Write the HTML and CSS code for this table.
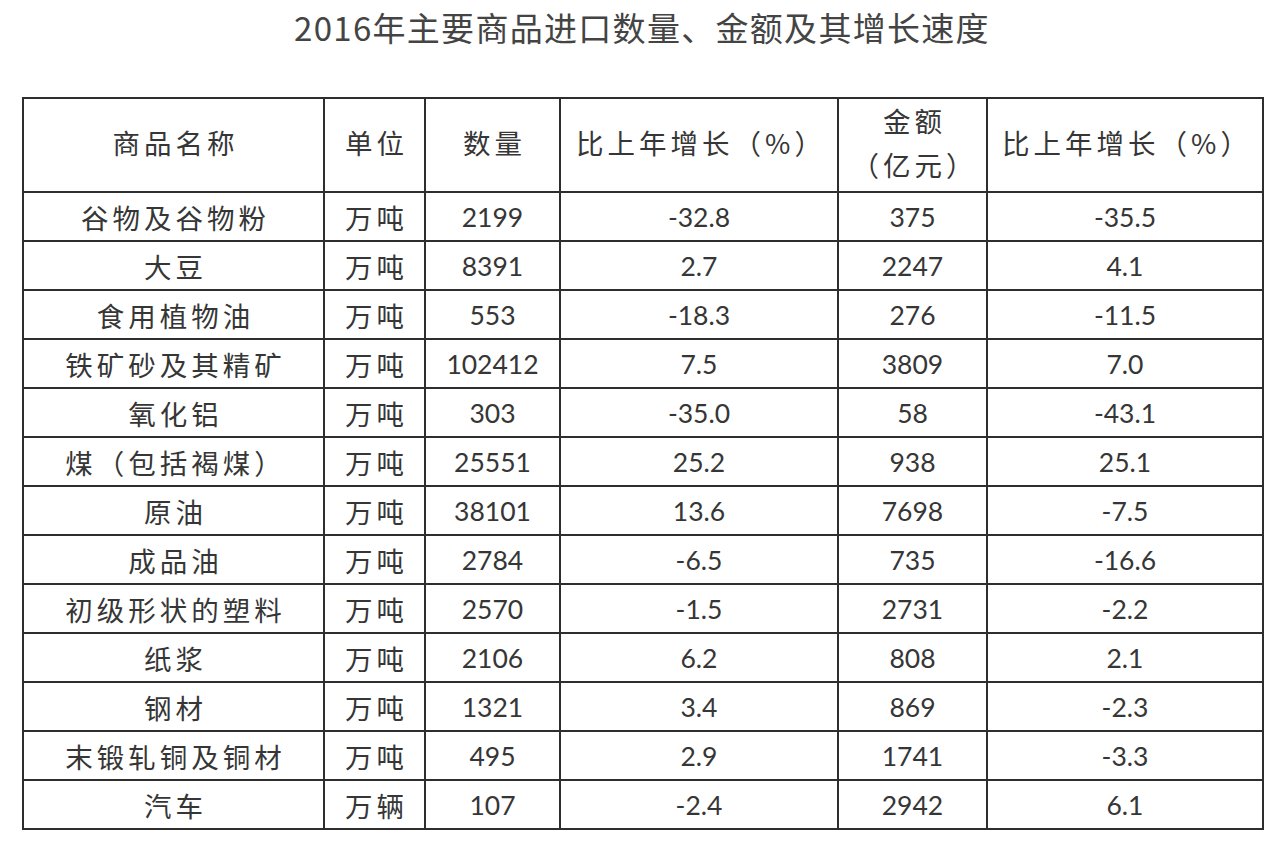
FILE: index.html
```html
<!DOCTYPE html>
<html lang="zh-CN">
<head>
<meta charset="utf-8">
<title>2016年主要商品进口数量、金额及其增长速度</title>
<link rel="stylesheet" href="styles.css">
</head>
<body>
<h1 class="title">2016年主要商品进口数量、金额及其增长速度</h1>
<div class="grid">
  <div class="cell head cjk">商品名称</div>
  <div class="cell head cjk">单位</div>
  <div class="cell head cjk">数量</div>
  <div class="cell head cjk">比上年增长（%）</div>
  <div class="cell head cjk two"><span>金额</span><span>（亿元）</span></div>
  <div class="cell head cjk">比上年增长（%）</div>

  <div class="cell cjk">谷物及谷物粉</div><div class="cell cjk">万吨</div><div class="cell num">2199</div><div class="cell num">-32.8</div><div class="cell num">375</div><div class="cell num">-35.5</div>
  <div class="cell cjk">大豆</div><div class="cell cjk">万吨</div><div class="cell num">8391</div><div class="cell num">2.7</div><div class="cell num">2247</div><div class="cell num">4.1</div>
  <div class="cell cjk">食用植物油</div><div class="cell cjk">万吨</div><div class="cell num">553</div><div class="cell num">-18.3</div><div class="cell num">276</div><div class="cell num">-11.5</div>
  <div class="cell cjk">铁矿砂及其精矿</div><div class="cell cjk">万吨</div><div class="cell num">102412</div><div class="cell num">7.5</div><div class="cell num">3809</div><div class="cell num">7.0</div>
  <div class="cell cjk">氧化铝</div><div class="cell cjk">万吨</div><div class="cell num">303</div><div class="cell num">-35.0</div><div class="cell num">58</div><div class="cell num">-43.1</div>
  <div class="cell cjk">煤（包括褐煤）</div><div class="cell cjk">万吨</div><div class="cell num">25551</div><div class="cell num">25.2</div><div class="cell num">938</div><div class="cell num">25.1</div>
  <div class="cell cjk">原油</div><div class="cell cjk">万吨</div><div class="cell num">38101</div><div class="cell num">13.6</div><div class="cell num">7698</div><div class="cell num">-7.5</div>
  <div class="cell cjk">成品油</div><div class="cell cjk">万吨</div><div class="cell num">2784</div><div class="cell num">-6.5</div><div class="cell num">735</div><div class="cell num">-16.6</div>
  <div class="cell cjk">初级形状的塑料</div><div class="cell cjk">万吨</div><div class="cell num">2570</div><div class="cell num">-1.5</div><div class="cell num">2731</div><div class="cell num">-2.2</div>
  <div class="cell cjk">纸浆</div><div class="cell cjk">万吨</div><div class="cell num">2106</div><div class="cell num">6.2</div><div class="cell num">808</div><div class="cell num">2.1</div>
  <div class="cell cjk">钢材</div><div class="cell cjk">万吨</div><div class="cell num">1321</div><div class="cell num">3.4</div><div class="cell num">869</div><div class="cell num">-2.3</div>
  <div class="cell cjk">末锻轧铜及铜材</div><div class="cell cjk">万吨</div><div class="cell num">495</div><div class="cell num">2.9</div><div class="cell num">1741</div><div class="cell num">-3.3</div>
  <div class="cell cjk">汽车</div><div class="cell cjk">万辆</div><div class="cell num">107</div><div class="cell num">-2.4</div><div class="cell num">2942</div><div class="cell num">6.1</div>
</div>
</body>
</html>
```

FILE: styles.css
```css
html, body {
  margin: 0;
  padding: 0;
  background: #ffffff;
}

body {
  font-family: "Noto Sans CJK SC", "Noto Sans", sans-serif;
  color: #333333;
}

.title {
  margin: 0;
  height: 56px;
  line-height: 54px;
  text-align: center;
  font-size: 33px;
  font-weight: normal;
  letter-spacing: 1.3px;
  color: #444444;
  padding-left: 1px;
}

.grid {
  display: grid;
  grid-template-columns: 301px 101px 135px 278px 149px 276px;
  grid-template-rows: 94px repeat(13, 49px);
  width: max-content;
  margin: 41px 0 0 22px;
  border-left: 2px solid #2e2e2e;
  border-top: 2px solid #2e2e2e;
}

.cell {
  box-sizing: border-box;
  border-right: 2px solid #2e2e2e;
  border-bottom: 2px solid #2e2e2e;
  display: flex;
  align-items: center;
  justify-content: center;
  white-space: nowrap;
}

.cjk {
  font-family: "Noto Sans CJK SC", sans-serif;
  font-size: 27.5px;
  letter-spacing: 4px;
  padding-left: 4px;
  color: #363636;
}

.num {
  font-family: "Lato", "Noto Sans", sans-serif;
  font-size: 26.5px;
  color: #363636;
}

.head {
  padding-bottom: 6px;
}

.two {
  flex-direction: column;
  line-height: 44px;
}
```
